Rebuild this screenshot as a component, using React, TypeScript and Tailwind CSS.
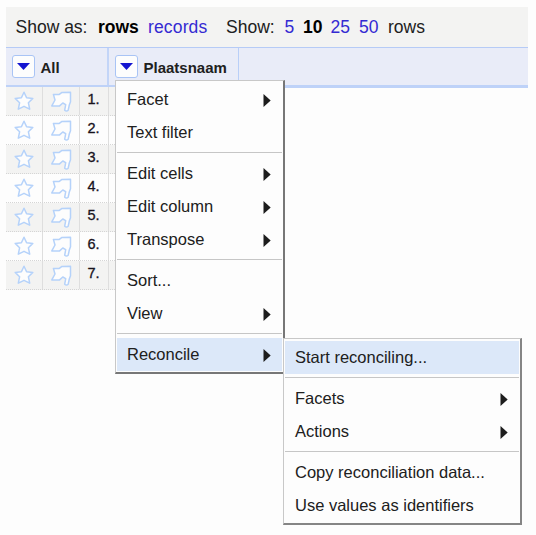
import React from "react";

type Entry = { label: string; sub?: boolean; active?: boolean; sep?: boolean };

const columnMenu: Entry[] = [
  { label: "Facet", sub: true },
  { label: "Text filter" },
  { label: "", sep: true },
  { label: "Edit cells", sub: true },
  { label: "Edit column", sub: true },
  { label: "Transpose", sub: true },
  { label: "", sep: true },
  { label: "Sort..." },
  { label: "View", sub: true },
  { label: "", sep: true },
  { label: "Reconcile", sub: true, active: true },
];

const reconcileMenu: Entry[] = [
  { label: "Start reconciling...", active: true },
  { label: "", sep: true },
  { label: "Facets", sub: true },
  { label: "Actions", sub: true },
  { label: "", sep: true },
  { label: "Copy reconciliation data..." },
  { label: "Use values as identifiers" },
];

function MenuEntries({ entries }: { entries: Entry[] }) {
  return (
    <>
      {entries.map((e, i) =>
        e.sep ? (
          <div key={i} className="h-2 pt-[3px]">
            <div className="h-px bg-[#c6c6c6]" />
          </div>
        ) : (
          <div
            key={i}
            className={`flex h-[33px] items-center justify-between pl-2.5 pr-[11px] ${e.active ? "bg-[#dce8f9]" : ""}`}
          >
            <span className="whitespace-nowrap text-[16.5px] leading-[33px]">{e.label}</span>
            {e.sub && (
              <svg width="8" height="13" viewBox="0 0 8 13" className="mt-px shrink-0">
                <path d="M0.5 0 L7.7 6.5 L0.5 13 Z" fill="#1d1d1d" />
              </svg>
            )}
          </div>
        ),
      )}
    </>
  );
}

function DropButton() {
  return (
    <div className="flex h-[23px] w-[23px] shrink-0 items-center justify-center rounded-[3px] border border-[#a9c4f5] bg-[#fdfdfd]">
      <svg width="13" height="7" viewBox="0 0 13 7">
        <path d="M0 0 H13 L6.5 7 Z" fill="#1515d0" />
      </svg>
    </div>
  );
}

function Star() {
  return (
    <svg width="20" height="20" viewBox="0 0 20 20" fill="#fdfdfd" stroke="#b5d2fa" strokeWidth="1.5" strokeLinejoin="round">
      <path d="M10 1.2 L12.6 6.8 L18.8 7.4 L14.4 11.8 L15.7 18.2 L10 15.3 L4.3 18.2 L5.6 11.8 L1.2 7.4 L7.4 6.8 Z" />
    </svg>
  );
}

function Flag() {
  return (
    <svg width="22" height="22" viewBox="0 0 22 22" fill="#fdfdfd" stroke="#b5d2fa" strokeWidth="1.5" strokeLinejoin="round">
      <path d="M3.4 3.4 L9.3 3.4 L12 1.4 L20.5 1.2 L20.5 10.7 L19.3 14 L18.2 19.2 Q16.5 20.8 14.7 19.2 L15.7 13.7 L12.8 12 L9.6 14.9 L1.8 14.9 L5 9 Z" />
    </svg>
  );
}

export default function App() {
  return (
    <div className="relative h-[535px] w-[536px] overflow-hidden bg-[#fdfdfd] pl-1.5 pt-[7px] font-['Liberation_Sans',Arial,sans-serif] text-[#202020]">
      <div className="w-[522px]">
        <div className="flex h-10 items-center bg-[#f3f3f2] pl-[9.5px] text-[17.5px] leading-10">
          <span className="w-[82.5px]">Show as:</span>
          <b className="w-[50px] text-black">rows</b>
          <span className="w-[78px] tracking-[0.15px] text-[#342ad2]">records</span>
          <span className="w-[58.5px]">Show:</span>
          <span className="w-[18.5px] text-[#342ad2]">5</span>
          <b className="w-[27.5px] text-black">10</b>
          <span className="w-[28.5px] text-[#342ad2]">25</span>
          <span className="w-[29px] text-[#342ad2]">50</span>
          <span>rows</span>
        </div>
        <div className="flex h-[41px] border-b-[3px] border-t border-b-[#bed2f8] border-t-[#b6cbf6] bg-[#e9ecf8] text-[15px] font-bold">
          <div className="flex w-[103px] items-center border-r-2 border-[#c3d5f8] pl-[5.5px]">
            <DropButton />
            <span className="ml-1.5 pt-[3px]">All</span>
          </div>
          <div className="flex w-[130px] items-center border-r border-[#b9cff8] pl-[5.5px]">
            <DropButton />
            <span className="ml-1.5 pt-[3px]">Plaatsnaam</span>
          </div>
        </div>
        <div className="-mt-px w-[109px]">
          {[1, 2, 3, 4, 5, 6, 7].map((n) => (
            <div
              key={n}
              className={`flex h-[29px] border-b border-dotted border-[#d5d5d5] ${n % 2 ? "bg-[#f3f3f2]" : "bg-[#fdfdfd]"}`}
            >
              <div className="flex w-[37px] items-center border-r border-[#dedede] pl-2">
                <Star />
              </div>
              <div className="flex w-[37px] items-center border-r border-[#dedede] pl-[7px] pt-px">
                <Flag />
              </div>
              <div className="w-[29px] border-r border-[#dedede] pl-[7.5px] text-[14.5px] leading-[25px] text-[#18121c] [-webkit-text-stroke:0.3px]">
                {n}.
              </div>
            </div>
          ))}
        </div>
      </div>
      <div className="absolute left-[114.5px] top-20 h-[294px] w-[170.5px] border border-b-2 border-r-2 border-b-[#777] border-l-[#c8c8c8] border-r-[#777] border-t-[#c8c8c8] bg-[#fdfdfd] pl-[1.5px] pr-px pt-0.5">
        <MenuEntries entries={columnMenu} />
      </div>
      <div className="absolute left-[283px] top-[338px] h-[187px] w-[239px] border border-b-2 border-r-2 border-b-[#858585] border-l-[#c8c8c8] border-r-[#858585] border-t-[#c8c8c8] bg-[#fdfdfd] px-px pt-0.5">
        <MenuEntries entries={reconcileMenu} />
      </div>
    </div>
  );
}
